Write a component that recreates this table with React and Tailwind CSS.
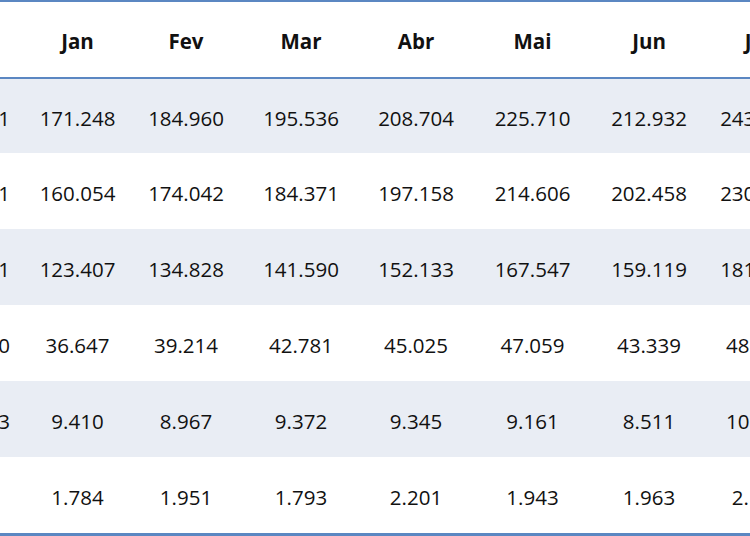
const cols = [
  { w: 'w-[109px]', label: 'Jan' },
  { w: 'w-[108px]', label: 'Fev' },
  { w: 'w-[122px]', label: 'Mar' },
  { w: 'w-[108px]', label: 'Abr' },
  { w: 'w-[125px]', label: 'Mai' },
  { w: 'w-[108px]', label: 'Jun' },
  { w: 'w-[110px]', label: 'Jul' },
];

const rows = [
  { label: '2021', h: 'h-[74px]', values: ['171.248', '184.960', '195.536', '208.704', '225.710', '212.932', '243.517'] },
  { label: '2021', h: 'h-[76px]', values: ['160.054', '174.042', '184.371', '197.158', '214.606', '202.458', '230.119'] },
  { label: '2021', h: 'h-[76px]', values: ['123.407', '134.828', '141.590', '152.133', '167.547', '159.119', '181.206'] },
  { label: '2020', h: 'h-[76px]', values: ['36.647', '39.214', '42.781', '45.025', '47.059', '43.339', '48.913'] },
  { label: '2023', h: 'h-[76px]', values: ['9.410', '8.967', '9.372', '9.345', '9.161', '8.511', '10.204'] },
  { label: '', h: 'h-[76px]', values: ['1.784', '1.951', '1.793', '2.201', '1.943', '1.963', '2.118'] },
];

export default function App() {
  return (
    <div className="w-[750px] h-[536px] overflow-hidden bg-white text-[#111] font-['Open_Sans',sans-serif] text-[20.5px]">
      <div className="border-t-2 border-b-[3px] border-[#5b87c2] w-max">
        {/* header */}
        <div className="flex h-[77px] items-center pt-[3px] border-b-2 border-[#5b87c2] font-bold">
          <div className="w-[23px] shrink-0" />
          {cols.map((c) => (
            <div key={c.label} className={`${c.w} shrink-0 text-center`}>
              {c.label}
            </div>
          ))}
        </div>

        {/* body */}
        {rows.map((r, i) => (
          <div
            key={i}
            className={`flex items-center pt-[4px] ${r.h} ${i % 2 === 0 ? 'bg-[#e9edf4]' : 'bg-white'}`}
          >
            <div className="w-[23px] shrink-0 overflow-hidden flex justify-end pr-[13px] whitespace-nowrap">
              <span>{r.label}</span>
            </div>
            {r.values.map((v, j) => (
              <div key={j} className={`${cols[j].w} shrink-0 text-center`}>
                {v}
              </div>
            ))}
          </div>
        ))}
      </div>
    </div>
  );
}
